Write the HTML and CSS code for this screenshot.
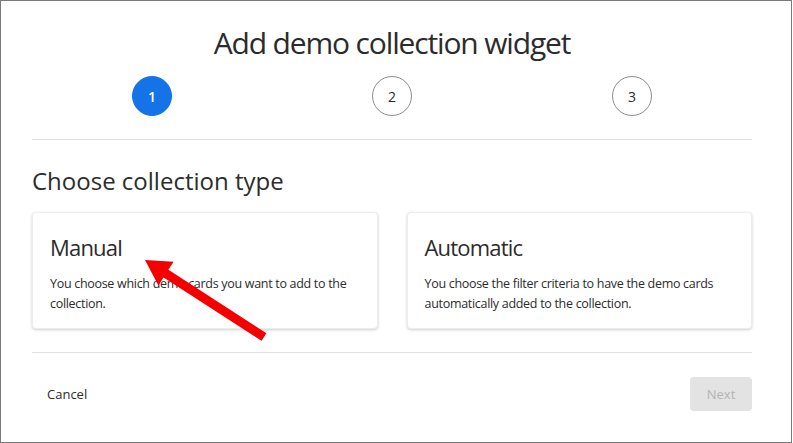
FILE: index.html
```html
<!DOCTYPE html>
<html lang="en">
<head>
<meta charset="utf-8">
<title>Add demo collection widget</title>
<link rel="stylesheet" href="styles.css">
</head>
<body>
<div class="frame">
  <div class="dialog">
    <h1 class="title">Add demo collection widget</h1>
    <div class="steps">
      <div class="step"><span class="dot active">1</span></div>
      <div class="step"><span class="dot">2</span></div>
      <div class="step"><span class="dot">3</span></div>
    </div>
    <hr class="rule">
    <h2 class="heading">Choose collection type</h2>
    <div class="cards">
      <div class="card">
        <h3 class="card-title">Manual</h3>
        <p class="card-text">You choose which demo cards you want to add to the collection.</p>
      </div>
      <div class="card">
        <h3 class="card-title">Automatic</h3>
        <p class="card-text">You choose the filter criteria to have the demo cards automatically added to the collection.</p>
      </div>
    </div>
    <hr class="rule rule-bottom">
    <div class="footer">
      <button class="btn btn-quiet">Cancel</button>
      <button class="btn btn-next" disabled>Next</button>
    </div>
  </div>
  <svg class="arrow" width="792" height="443" viewBox="0 0 792 443" aria-hidden="true">
    <polygon fill="#f50000" points="145,260 173.6,261.8 168.4,269.8 266.4,333.2 261.6,340.8 163.6,277.4 158.4,285.4"/>
  </svg>
</div>
</body>
</html>
```

FILE: styles.css
```css
* { box-sizing: border-box; }
html, body { margin: 0; padding: 0; background: #fff; }
body { font-family: "Open Sans", "Liberation Sans", sans-serif; color: #2c2c2c; }

.frame {
  position: relative;
  width: 792px;
  height: 443px;
  border: 1px solid #7a7a7a;
  background: #fff;
  overflow: hidden;
}

.dialog {
  width: 720px;
  margin-left: 31px;
  display: flex;
  flex-direction: column;
}

.title {
  margin: 24px 0 0;
  font-size: 30px;
  line-height: 36px;
  font-weight: 400;
  text-align: center;
  letter-spacing: -1.15px;
  color: #2c2c2c;
}

.steps {
  display: grid;
  grid-template-columns: repeat(3, 1fr);
  margin-top: 15px;
}
.step { display: flex; justify-content: center; }
.dot {
  width: 40px;
  height: 40px;
  border-radius: 50%;
  border: 1px solid #8e8e8e;
  display: flex;
  align-items: center;
  justify-content: center;
  font-size: 14px;
  color: #2c2c2c;
}
.dot.active {
  background: #1473e6;
  border-color: #1473e6;
  color: #fff;
  font-weight: 600;
}

.rule {
  margin: 23px 0 0;
  border: 0;
  height: 1px;
  background: #e1e1e1;
}

.heading {
  margin: 26px 0 0;
  font-size: 24px;
  line-height: 30px;
  font-weight: 400;
  letter-spacing: 0;
}

.cards {
  display: grid;
  grid-template-columns: 1fr 1fr;
  gap: 29px;
  margin-top: 16px;
}
.card {
  height: 117px;
  background: #fff;
  border-radius: 4px;
  border: 1px solid #ececec;
  box-shadow: 0 1px 3px rgba(0, 0, 0, 0.2);
  padding: 20px 17px 0;
}
.card-title {
  margin: 0;
  font-size: 22px;
  line-height: 28px;
  font-weight: 400;
  letter-spacing: -0.8px;
}
.card-text {
  margin: 13px 0 0;
  font-size: 12.5px;
  line-height: 20px;
  letter-spacing: -0.3px;
  color: #2c2c2c;
}

.rule-bottom { margin-top: 23px; }

.footer {
  display: flex;
  justify-content: space-between;
  align-items: center;
  margin-top: 24px;
}
.btn {
  font-family: inherit;
  font-size: 13px;
  border: 0;
  border-radius: 4px;
  height: 34px;
}
.btn-quiet {
  background: transparent;
  color: #2c2c2c;
  padding: 0 15px;
}
.btn-next {
  width: 62px;
  background: #e3e3e3;
  color: #b3b3b3;
}

.arrow {
  position: absolute;
  left: -1px;
  top: -1px;
  pointer-events: none;
}
```
